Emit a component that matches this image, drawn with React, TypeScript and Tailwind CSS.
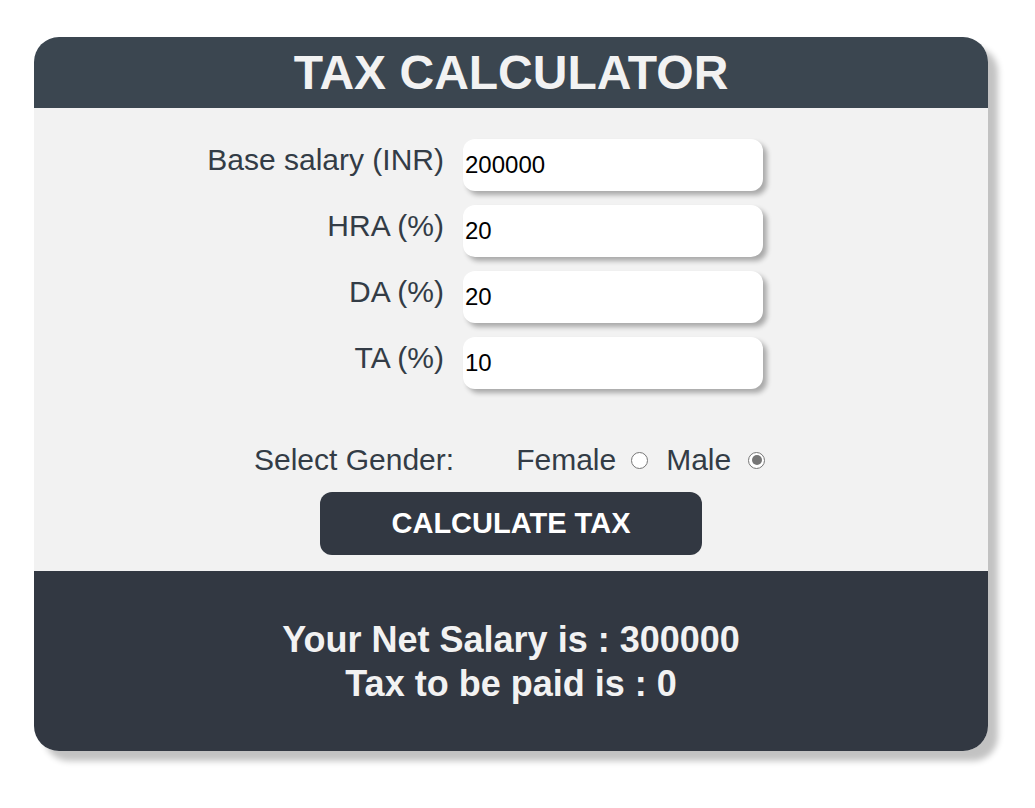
import React from "react";

function Radio({ checked }: { checked?: boolean }) {
  return (
    <span className="inline-flex h-[17px] w-[17px] items-center justify-center rounded-full border-[1.5px] border-[#767676] bg-white">
      {checked ? <span className="h-[10px] w-[10px] rounded-full bg-[#767676]" /> : null}
    </span>
  );
}

export default function App() {
  const rows = [
    ["Base salary (INR)", "200000"],
    ["HRA (%)", "20"],
    ["DA (%)", "20"],
    ["TA (%)", "10"],
  ];
  return (
    <div className="min-h-[808px] w-[1035px] bg-white pl-[34px] pt-[37px] font-['Liberation_Sans',Arial,sans-serif]">
      <div className="w-[954px] overflow-hidden rounded-[25px] shadow-[10px_10px_6px_rgba(0,0,0,0.24)]">
        <div className="flex h-[71px] items-center justify-center bg-[#3b4650]">
          <h1 className="text-[48px] font-bold leading-none text-[#f2f2f2]">TAX CALCULATOR</h1>
        </div>
        <div className="bg-[#f2f2f2] pb-[16px] pt-[31px]">
          <div className="grid grid-cols-[410px_300px] gap-x-[19px] gap-y-[14px]">
            {rows.map(([label, value]) => (
              <React.Fragment key={label}>
                <div className="pt-[4px] text-right text-[30px] leading-[34px] text-[#333c46]">{label}</div>
                <input
                  readOnly
                  value={value}
                  className="h-[52px] w-[300px] rounded-[12px] bg-white pl-[2px] text-[24px] text-black shadow-[4px_4px_5px_rgba(0,0,0,0.3)] outline-none"
                />
              </React.Fragment>
            ))}
          </div>
          <div className="mt-[54px] flex items-center pl-[220px] text-[30px] leading-[34px] text-[#333c46]">
            <span>Select Gender:</span>
            <span className="ml-[62px]">Female</span>
            <span className="ml-[15px] flex"><Radio /></span>
            <span className="ml-[18px]">Male</span>
            <span className="ml-[17px] flex"><Radio checked /></span>
          </div>
          <div className="mt-[15px] flex justify-center">
            <button className="h-[63px] w-[382px] rounded-[12px] bg-[#323842] text-[29px] font-bold text-white">
              CALCULATE TAX
            </button>
          </div>
        </div>
        <div className="flex h-[180px] flex-col items-center justify-center bg-[#323842] pt-[2px] text-[36px] font-bold leading-[44px] text-[#f2f2f2]">
          <div>Your Net Salary is : 300000</div>
          <div>Tax to be paid is : 0</div>
        </div>
      </div>
    </div>
  );
}
